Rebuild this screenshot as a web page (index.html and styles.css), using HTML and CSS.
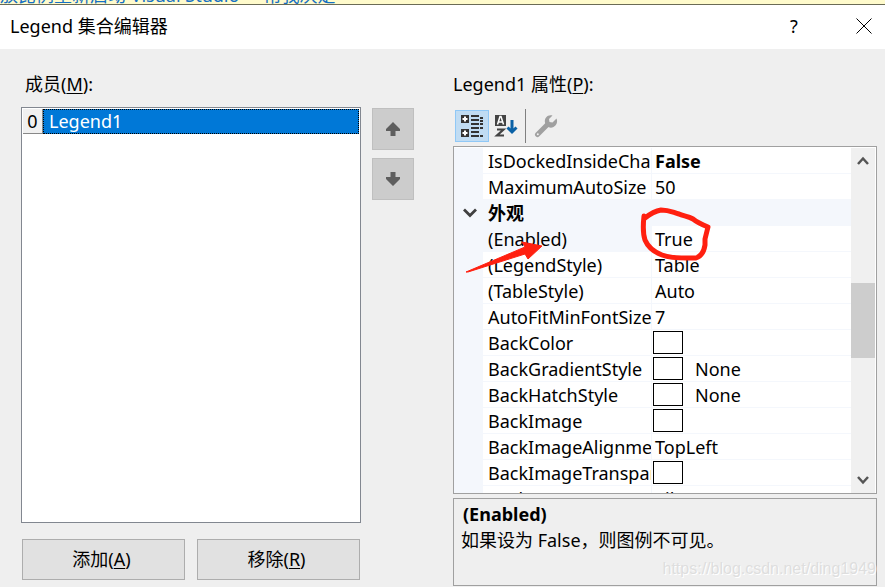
FILE: index.html
```
<!DOCTYPE html>
<html lang="zh-CN">
<head>
    <meta charset="UTF-8">
    <meta name="viewport" content="width=device-width, initial-scale=1.0">
    <title>Legend 集合编辑器</title>
    <link rel="stylesheet" href="styles.css">
</head>
<body>
    <div class="notice">
        <a href="#">放比例重新启动 Visual Studio</a>
        <a href="#">帮我决定</a>
    </div>

    <header class="titlebar">
        <h1>Legend 集合编辑器</h1>
        <button class="caption-btn" aria-label="帮助">?</button>
        <button class="caption-btn" aria-label="关闭">
            <svg width="16" height="16" viewBox="0 0 16 16"><path d="M.5.5l15 15M15.500.5l-15 15" stroke="#000" stroke-width="1" fill="none"/></svg>
        </button>
    </header>

    <main class="editor">
        <section class="members">
            <h2 class="label" id="membersLabel">成员(<u>M</u>):</h2>
            <ul class="member-list" role="listbox" aria-labelledby="membersLabel">
                <li role="option" aria-selected="true"><span class="index">0</span><span class="name">Legend1</span></li>
            </ul>
            <div class="member-buttons">
                <button class="btn">添加(<u>A</u>)</button>
                <button class="btn">移除(<u>R</u>)</button>
            </div>
        </section>

        <div class="move-buttons">
            <button class="move-btn" aria-label="上移">
                <svg width="14" height="14" viewBox="0 0 14 14"><path d="M7 0l7 7v2H9.500v5h-5V9H0V7z" fill="#5e5e5e"/></svg>
            </button>
            <button class="move-btn" aria-label="下移">
                <svg width="14" height="14" viewBox="0 0 14 14"><path d="M7 14l7-7V5H9.500V0h-5v5H0v2z" fill="#5e5e5e"/></svg>
            </button>
        </div>

        <section class="properties">
            <h2 class="label">Legend1 属性(<u>P</u>):</h2>

            <div class="toolbar">
                <button class="tool active" aria-label="按分类顺序">
                    <svg width="24" height="24" viewBox="0 0 24 24">
                        <path d="M1 1h8v8H1zM1 15h8v8H1z" fill="#333"/>
                        <path d="M5 2.500v5M2.500 5h5M5 16.500v5M2.500 19h5" stroke="#fff" stroke-width="2"/>
                        <path d="M11 2h8M11 6h8M11 10h8M11 14h8M20 4h3M20 7h3M20 10h3M20 14h3M11 18h8M11 22h8M20 22h3" stroke="#333" stroke-width="2"/>
                    </svg>
                </button>
                <button class="tool" aria-label="按字母顺序">
                    <svg width="24" height="24" viewBox="0 0 24 24">
                        <path d="M1 1h11v11H1z" fill="#444"/>
                        <path d="M3.500 10.500l2.500-8h1l2.500 8M4.500 8h4" stroke="#fff" stroke-width="1.500" fill="none"/>
                        <path d="M3 15.500h6.500L3 21.500h7" stroke="#444" stroke-width="2.200" fill="none"/>
                        <path d="M18 6v12M13.500 13.500l4.500 4.500 4.500-4.500" stroke="#0a61a6" stroke-width="3" fill="none"/>
                    </svg>
                </button>
                <span class="separator"></span>
                <button class="tool" aria-label="属性页" disabled>
                    <svg width="24" height="24" viewBox="0 0 24 24">
                        <path d="M3.500 20.500L13 11" stroke="#a0a0a0" stroke-width="5" stroke-linecap="round"/>
                        <path d="M18.500 1.500C14 0 10 4 11 8.500c.500 4 5 6.500 8.500 4.500 3-1.500 4.500-5 3-8.500l-4 4-3-.500-.500-3z" fill="#a0a0a0"/>
                        <circle cx="3.800" cy="20.200" r="1" fill="#efefef"/>
                    </svg>
                </button>
            </div>

            <div class="grid">
                <div class="grid-view">
                    <table>
                        <colgroup><col class="col-gutter"><col class="col-name"><col></colgroup>
                        <tbody>
                            <tr><td></td><th>IsDockedInsideChartArea</th><td><b>False</b></td></tr>
                            <tr><td></td><th>MaximumAutoSize</th><td>50</td></tr>
                            <tr class="category">
                                <td><button class="expander" aria-label="折叠"><svg width="14" height="10" viewBox="0 0 14 10"><path d="M1 1.500l6 6 6-6" stroke="#404040" stroke-width="2.800" fill="none"/></svg></button></td>
                                <th colspan="2">外观</th>
                            </tr>
                            <tr class="selected"><td></td><th>(Enabled)</th><td>True</td></tr>
                            <tr><td></td><th>(LegendStyle)</th><td>Table</td></tr>
                            <tr><td></td><th>(TableStyle)</th><td>Auto</td></tr>
                            <tr><td></td><th>AutoFitMinFontSize</th><td>7</td></tr>
                            <tr><td></td><th>BackColor</th><td><span class="swatch"></span></td></tr>
                            <tr><td></td><th>BackGradientStyle</th><td><span class="swatch"></span>None</td></tr>
                            <tr><td></td><th>BackHatchStyle</th><td><span class="swatch"></span>None</td></tr>
                            <tr><td></td><th>BackImage</th><td><span class="swatch"></span></td></tr>
                            <tr><td></td><th>BackImageAlignment</th><td>TopLeft</td></tr>
                            <tr><td></td><th>BackImageTransparentColor</th><td><span class="swatch"></span></td></tr>
                            <tr><td></td><th>BackImageWrapMode</th><td>Tile</td></tr>
                        </tbody>
                    </table>
                </div>
                <div class="scrollbar">
                    <button aria-label="向上滚动"><svg width="12" height="10" viewBox="0 0 12 10"><path d="M1 8l5-5.500L11 8" stroke="#555" stroke-width="2.500" fill="none"/></svg></button>
                    <div class="track"><div class="thumb"></div></div>
                    <button aria-label="向下滚动"><svg width="12" height="10" viewBox="0 0 12 10"><path d="M1 2l5 5.500L11 2" stroke="#555" stroke-width="2.500" fill="none"/></svg></button>
                </div>
                <!-- hand-drawn arrow and circle over the Enabled row -->
                <svg class="marks" width="270" height="140" viewBox="0 0 270 140">
                    <path d="M12 125L71 100 68 95 88 99 74 112 71 107 14 125z" fill="#ff2010" stroke="#ff2010" stroke-width="1"/>
                    <path d="M190 69C189 78 189 87 191 93C194 100 200 105 208 108C219 112 230 111 242 111C248 109 250 104 251 98V92L254 80C249 78 244 76 239 72C234 69 229 69 225 67C218 65 215 63 207 63C201 64 196 67 191 71" fill="none" stroke="#ff2010" stroke-width="5" stroke-linecap="round" stroke-linejoin="round"/>
                </svg>
            </div>

            <div class="description">
                <h3>(Enabled)</h3>
                <p>如果设为 False，则图例不可见。</p>
                <span class="watermark">https://blog.csdn.net/ding1949</span>
            </div>
        </section>
    </main>
</body>
</html>
```

FILE: styles.css
```
* { box-sizing: border-box; }
body {
    display: flex;
    flex-direction: column;
    height: 100vh;
    margin: 0;
    overflow: hidden;
    font-family: "Noto Sans", "Noto Sans CJK SC", sans-serif;
    font-size: 18px;
    line-height: 26px;
    color: #000;
    background-color: #efefef;
}
h1, h2, h3, p, ul {
    margin: 0;
    padding: 0;
    font-size: 18px;
    font-weight: normal;
}
button {
    padding: 0;
    border: none;
    background: none;
    color: inherit;
    font: inherit;
}
svg { display: block; }
u { text-underline-offset: 2px; text-decoration-thickness: 1px; }

.notice {
    display: flex;
    flex: none;
    align-items: flex-end;
    gap: 24px;
    height: 5px;
    overflow: hidden;
    border-bottom: 1px solid #6b6b55;
    background-color: #fffbcc;
    line-height: 18px;
    white-space: nowrap;
}
.notice a { color: #1670c4; text-decoration: none; }

.titlebar {
    display: flex;
    flex: none;
    align-items: center;
    height: 44px;
    padding: 0 12px 2px 10px;
    background-color: #fff;
}
.titlebar h1 { flex: 1; }
.caption-btn {
    display: grid;
    place-items: center;
    width: 18px;
    height: 42px;
}
.caption-btn + .caption-btn { margin-left: 52px; }

.editor {
    display: grid;
    flex: 1;
    grid-template-columns: minmax(0, 340fr) 92px minmax(0, 424fr);
    grid-template-rows: minmax(0, 1fr);
    min-height: 0;
    padding: 22px 8px 1px 21px;
}
.label { flex: none; height: 36px; }

.members { display: flex; flex-direction: column; padding-bottom: 6px; }
.members .label { padding-left: 4px; }
.member-list {
    flex: 1;
    padding: 1px;
    border: 1px solid #828790;
    background-color: #fff;
    list-style: none;
}
.member-list li { display: flex; height: 25px; line-height: 25px; }
.index {
    width: 20px;
    border-right: 1px solid #888;
    border-bottom: 1px solid #888;
    background-color: #f0f0f0;
    text-align: center;
}
.name {
    flex: 1;
    padding-left: 5px;
    border: 1px dotted #000;
    background-color: #0078d7;
    color: #fff;
    line-height: 23px;
}
.member-buttons {
    display: grid;
    grid-template-columns: 1fr 1fr;
    gap: 12px;
    padding: 16px 1px 0;
}
.btn {
    height: 41px;
    padding: 0 4px 2px 0;
    border: 1px solid #adadad;
    background-color: #e1e1e1;
}

.move-buttons {
    display: flex;
    flex-direction: column;
    gap: 8px;
    padding: 37px 39px 0 11px;
}
.move-btn {
    display: grid;
    place-items: center;
    height: 42px;
    border: 1px solid #bfbfbf;
    background-color: #ccc;
}

.properties { display: flex; flex-direction: column; }
.toolbar {
    display: flex;
    flex: none;
    align-items: center;
    height: 39px;
    padding: 0 2px 1px;
}
.tool {
    display: grid;
    place-items: center;
    width: 34px;
    height: 32px;
    border: 1px solid transparent;
}
.tool.active { border-color: #90c8f6; background-color: #c0dcf3; }
.separator {
    width: 1px;
    height: 34px;
    margin: 0 3px 0 2px;
    background-color: #808080;
}

.grid {
    position: relative;
    display: flex;
    flex: 1;
    min-height: 0;
    padding-top: 1px;
    border: 1px solid #a0a0a0;
    background-color: #fff;
}
.grid-view { flex: 1; min-width: 0; overflow: hidden; }
table {
    width: 100%;
    border-spacing: 0;
    table-layout: fixed;
}
.col-gutter { width: 29px; }
.col-name { width: 169px; }
th, td {
    height: 26px;
    padding: 2px 0 0 3px;
    overflow: hidden;
    border-bottom: 1px solid #f4f7fc;
    font-weight: normal;
    line-height: 23px;
    text-align: left;
    white-space: nowrap;
}
th { padding-left: 5px; border-right: 1px solid #f4f7fc; }
td:first-child { padding-top: 0; background-color: #f4f7fc; }
.category th, .selected th { background-color: #f4f7fc; }
.category th { font-weight: bold; }
.expander { display: block; padding-left: 6px; }
.swatch {
    display: inline-block;
    width: 30px;
    height: 23px;
    margin: -1px 12px 0 -2px;
    border: 1px solid #000;
    vertical-align: top;
}

.scrollbar {
    display: flex;
    flex-direction: column;
    width: 25px;
    border-right: 1px solid #fff;
    background-color: #f0f0f0;
}
.scrollbar button {
    display: grid;
    place-items: center;
    height: 26px;
}
.track {
    display: grid;
    flex: 1;
    grid-template-rows: 109fr 75fr 109fr;
}
.thumb { grid-row: 2; background-color: #cdcdcd; }

.marks { position: absolute; top: 0; left: 0; pointer-events: none; }

.description {
    position: relative;
    flex: none;
    height: 88px;
    margin-top: 4px;
    padding: 2px 7px;
    border: 1px solid #a0a0a0;
}
.description h3 { padding-left: 2px; font-weight: bold; }
.watermark {
    position: absolute;
    right: 0;
    bottom: 3px;
    color: #dedede;
    font-family: "Liberation Sans", Arial, sans-serif;
    font-size: 16px;
    text-shadow: 1px 1px #fff;
}
```
